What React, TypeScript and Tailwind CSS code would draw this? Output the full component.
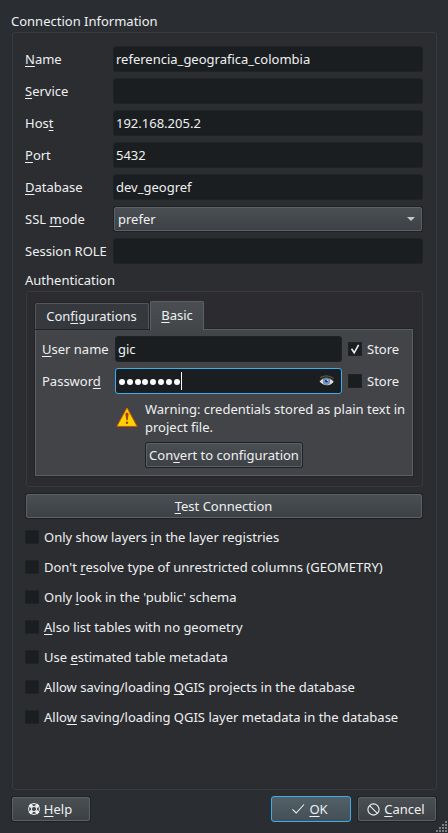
import React from "react";

// Wraps the mnemonic letter of a label, marked with "&", in an underlined span.
function Label({ text, className = "" }: { text: string; className?: string }) {
  const i = text.indexOf("&");
  if (i < 0) return <span className={`whitespace-pre ${className}`}>{text}</span>;
  return (
    <span className={`whitespace-pre ${className}`}>
      {text.slice(0, i)}
      <span className="underline decoration-1 underline-offset-2 [text-decoration-skip-ink:none]">{text[i + 1]}</span>
      {text.slice(i + 2)}
    </span>
  );
}

const field = "flex h-[26px] items-center rounded-[3px] border border-[#202326] bg-[#1b1e20]";
const button =
  "flex items-center rounded-[2px] border border-[#5c6165] bg-linear-to-b from-[#4a4f53] to-[#3d4145] shadow-[0_0_0_1px_#1f2225]";

function Row({ label, value = "" }: { label: string; value?: string }) {
  return (
    <div className="flex h-[26px] items-center">
      <Label text={label} className="w-[88px] shrink-0" />
      <div className={`${field} flex-1 pl-[2px]`}>{value}</div>
    </div>
  );
}

function Check({ checked = false }: { checked?: boolean }) {
  return (
    <span className="block size-[14px] shrink-0 border border-[#202326] bg-[#1b1e20]">
      {checked && (
        <svg width="12" height="12" viewBox="0 0 12 12" fill="none">
          <path d="M2.5 5.8 L5.2 9.8 L9.6 1.8" stroke="#eff0f1" strokeWidth="1.6" />
        </svg>
      )}
    </span>
  );
}

function Eye() {
  return (
    <svg width="16" height="14" viewBox="0 0 16 14">
      <path d="M.6 7.6 C3 3.5 11 2.4 14.8 7.6 C12 12.4 4.4 12.5 .6 7.6Z" fill="#e1e0dc" />
      <path d="M.5 7.2 C4 2.5 11.3 2.8 15.2 8" fill="none" stroke="#55554f" />
      <path d="M1 3.8 C5 1.5 10.5 1.6 14.6 4.4" fill="none" stroke="#55574f" strokeWidth="1.2" />
      <circle cx="7.5" cy="7.3" r="3.3" fill="#739fcf" stroke="#446c9f" strokeWidth=".6" />
      <circle cx="7.5" cy="7" r="1.4" fill="#18273c" />
      <circle cx="8.2" cy="6.2" r=".7" fill="#f4f7fb" />
    </svg>
  );
}

function Warning() {
  return (
    <svg width="22" height="21" viewBox="0 0 22 21">
      <defs>
        <linearGradient id="edge" x1="0" y1="0" x2="0" y2="1">
          <stop offset="0" stopColor="#ef6a00" />
          <stop offset="1" stopColor="#c8500a" />
        </linearGradient>
      </defs>
      <path d="M11 1 L21.2 19.4 H.8Z" fill="#ffd500" stroke="url(#edge)" strokeWidth="1" strokeLinejoin="round" />
      <path d="M9.4 7 Q9.4 5.5 11 5.5 Q12.6 5.5 12.6 7 L11.7 13.3 H10.3Z" fill="#a34406" />
      <circle cx="11" cy="15.8" r="1.25" fill="#a34406" />
    </svg>
  );
}

function HelpIcon() {
  return (
    <svg width="12" height="12" viewBox="0 0 12 12" fill="none" stroke="#eff0f1">
      <circle cx="6" cy="6" r="5.4" />
      <circle cx="6" cy="6" r="2.6" />
      <path d="M1.7 1.7 L4.1 4.1 M10.3 1.7 L7.9 4.1 M1.7 10.3 L4.1 7.9 M10.3 10.3 L7.9 7.9" strokeWidth="3.2" />
    </svg>
  );
}

const options = [
  "Only show layers &in the layer registries",
  "Don't &resolve type of unrestricted columns (GEOMETRY)",
  "Only &look in the 'public' schema",
  "&Also list tables with no geometry",
  "Use &estimated table metadata",
  "Allow saving/loading &QGIS projects in the database",
  "Allo&w saving/loading QGIS layer metadata in the database",
];

const grip = [
  [10, 0], [7, 3], [10, 3], [4, 6], [7, 6], [10, 6], [1, 9], [4, 9], [7, 9], [10, 9],
];

export default function App() {
  return (
    <div className="relative h-[833px] w-[448px] overflow-hidden bg-[#2a2e32] pt-3 pr-[11px] pl-3 font-['Noto_Sans',sans-serif] text-[13px] leading-[18px] text-[#eff0f1]">
      <div className="-ml-px h-5">Connection Information</div>

      <div className="h-[758px] rounded-[3px] border border-[#373b3e] bg-[#2b2d31] pt-[13px] pr-[13px] pl-3">
        <div className="flex flex-col gap-[6px]">
          <Row label="&Name" value="referencia_geografica_colombia" />
          <Row label="&Service" />
          <Row label="Hos&t" value="192.168.205.2" />
          <Row label="&Port" value="5432" />
          <Row label="&Database" value="dev_geogref" />
          <div className="flex h-[26px] items-center">
            <Label text="SSL &mode" className="w-[89px] shrink-0" />
            <div className={`${button} mr-px h-6 flex-1 justify-between pr-[6px] pl-[3px]`}>
              <span>prefer</span>
              <svg width="8" height="4" viewBox="0 0 8 4">
                <path d="M0 0H8L4 4Z" fill="#c6c8c9" />
              </svg>
            </div>
          </div>
          <Row label="Session ROLE" />
        </div>

        <div className="mt-[7px]">Authentication</div>

        <div className="mt-[2px] ml-px h-[196px] rounded-[3px] border border-[#37393d] bg-[#2c2c30] pt-[9px] pr-[9px] pl-2">
          <div className="flex h-[28px] items-end">
            <div className="flex h-[26px] w-[114px] items-center justify-center rounded-t-[2px] border border-b-0 border-[#55585b] bg-[#35383c] pr-px pb-px shadow-[0_0_0_1px_#222427]">
              <Label text="Con&figurations" />
            </div>
            <div className="relative z-10 -mb-px ml-px flex h-[29px] w-[54px] items-center justify-center rounded-t-[2px] border border-b-0 border-[#5c6064] bg-linear-to-b from-[#4a4e52] to-[#434649] pb-[3px]">
              <Label text="&Basic" />
            </div>
          </div>
          <div className="h-[147px] border border-[#5c6064] bg-[#424448] pt-[6px] pr-3 pl-[6px] shadow-[0_0_0_1px_#222427]">
            <div className="flex h-[26px] items-center">
              <Label text="&User name" className="w-[73px] shrink-0" />
              <div className={`${field} w-[227px] pl-[2px]`}>gic</div>
              <div className="ml-[6px] flex items-center gap-[5px]">
                <Check checked />
                <span>Store</span>
              </div>
            </div>
            <div className="mt-[6px] flex h-[26px] items-center">
              <Label text="Passwor&d" className="w-[73px] shrink-0" />
              <div className="flex h-[26px] w-[227px] items-center rounded-[3px] border border-[#3daee9] bg-[#1b1e20] pr-[6px] pl-[3px]">
                <div className="flex gap-[1.8px]">
                  {Array.from({ length: 8 }, (_, i) => (
                    <span key={i} className="mt-[2px] size-[6px] rounded-full bg-[#fcfcfc]" />
                  ))}
                </div>
                <span className="ml-px h-[18px] w-px bg-[#fcfcfc]" />
                <span className="ml-auto"><Eye /></span>
              </div>
              <div className="ml-[6px] flex items-center gap-[5px]">
                <Check />
                <span>Store</span>
              </div>
            </div>
            <div className="mt-[6px] flex pl-[74px]">
              <div className="mt-[7px] w-[29px] shrink-0"><Warning /></div>
              <div className="whitespace-nowrap">
                Warning: credentials stored as plain text in
                <br />
                project file.
              </div>
            </div>
            <div className={`${button} mt-[7px] ml-[104px] h-6 w-[156px] justify-center`}>
              <Label text="Con&vert to configuration" />
            </div>
          </div>
        </div>

        <div className={`${button} mt-[7px] mr-px ml-px h-6 justify-center pr-px`}>
          <Label text="&Test Connection" />
        </div>

        <div className="mt-[10px] flex flex-col gap-3">
          {options.map((o) => (
            <div key={o} className="flex h-[18px] items-center gap-[5px]">
              <Check />
              <Label text={o} />
            </div>
          ))}
        </div>
      </div>

      <div className="mt-[6px] mr-px flex h-[26px] items-center">
        <div className={`${button} h-6 w-[78px] justify-center gap-1 pr-[2px]`}>
          <HelpIcon />
          <Label text="&Help" />
        </div>
        <div className="ml-auto flex h-[26px] w-20 items-center justify-center gap-1 rounded-[3px] border border-[#3daee9] bg-linear-to-b from-[#526067] to-[#434f56] pr-[2px]">
          <svg width="13" height="12" viewBox="0 0 13 12" fill="none">
            <path d="M.5 6.3 L4.2 10 L12 1.5" stroke="#eff0f1" strokeWidth="1.1" />
          </svg>
          <Label text="&OK" />
        </div>
        <div className={`${button} ml-[7px] h-6 w-[78px] justify-center gap-1 pr-[2px]`}>
          <svg width="13" height="13" viewBox="0 0 13 13" fill="none" stroke="#eff0f1" strokeWidth="1.1">
            <circle cx="6.5" cy="6.5" r="5.6" />
            <path d="M2.6 2.6 L10.4 10.4" />
          </svg>
          <Label text="&Cancel" />
        </div>
      </div>

      <svg className="absolute right-0 bottom-0" width="13" height="12" viewBox="0 0 13 12">
        {grip.map(([x, y]) => (
          <rect key={`${x}-${y}`} x={x} y={y} width="2" height="2" fill="#7d8083" />
        ))}
      </svg>
    </div>
  );
}
